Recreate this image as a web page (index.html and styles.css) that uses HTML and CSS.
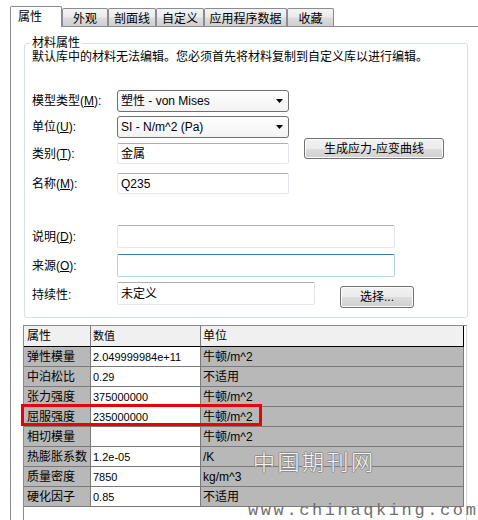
FILE: index.html
```html
<!DOCTYPE html>
<html>
<head>
<meta charset="utf-8">
<link rel="stylesheet" href="styles.css">
</head>
<body>
<div class="tabbar">
  <div class="tab active w52">属性</div>
  <div class="tab w46">外观</div>
  <div class="tab w48">剖面线</div>
  <div class="tab w48">自定义</div>
  <div class="tab w83">应用程序数据</div>
  <div class="tab w47">收藏</div>
</div>
<div class="panel">
  <fieldset class="group">
    <legend>材料属性</legend>
    <div class="desc">默认库中的材料无法编辑。您必须首先将材料复制到自定义库以进行编辑。</div>
    <div class="top">
      <div class="fields">
        <div class="row r1">
          <span class="lbl">模型类型(<u>M</u>):</span>
          <div class="combo"><span>塑性 - von Mises</span><svg width="7" height="4" viewBox="0 0 7 4"><path d="M0 0h7L3.5 4z" fill="#000"/></svg></div>
        </div>
        <div class="row r2">
          <span class="lbl">单位(<u>U</u>):</span>
          <div class="combo"><span>SI - N/m^2 (Pa)</span><svg width="7" height="4" viewBox="0 0 7 4"><path d="M0 0h7L3.5 4z" fill="#000"/></svg></div>
        </div>
        <div class="row r3">
          <span class="lbl">类别(<u>T</u>):</span>
          <div class="input short">金属</div>
        </div>
        <div class="row r4">
          <span class="lbl">名称(<u>M</u>):</span>
          <div class="input short">Q235</div>
        </div>
      </div>
      <div class="side"><div class="btn curve">生成应力-应变曲线</div></div>
    </div>
    <div class="row r5">
      <span class="lbl">说明(<u>D</u>):</span>
      <div class="input wide tall"></div>
    </div>
    <div class="row r6">
      <span class="lbl">来源(<u>O</u>):</span>
      <div class="input wide tall focus"></div>
    </div>
    <div class="row r7">
      <span class="lbl">持续性:</span>
      <div class="input mid tall">未定义</div>
      <div class="btn choose">选择...</div>
    </div>
  </fieldset>
  <div class="grid">
    <table>
      <tr class="head"><td class="c1">属性</td><td class="c2">数值</td><td class="c3">单位</td></tr>
      <tr><td class="c1">弹性模量</td><td class="c2">2.049999984e+11</td><td class="c3">牛顿/m^2</td></tr>
      <tr><td class="c1">中泊松比</td><td class="c2">0.29</td><td class="c3">不适用</td></tr>
      <tr><td class="c1">张力强度</td><td class="c2">375000000</td><td class="c3">牛顿/m^2</td></tr>
      <tr><td class="c1">屈服强度</td><td class="c2">235000000</td><td class="c3">牛顿/m^2</td></tr>
      <tr><td class="c1">相切模量</td><td class="c2"></td><td class="c3">牛顿/m^2</td></tr>
      <tr><td class="c1">热膨胀系数</td><td class="c2">1.2e-05</td><td class="c3">/K</td></tr>
      <tr><td class="c1">质量密度</td><td class="c2">7850</td><td class="c3">kg/m^3</td></tr>
      <tr><td class="c1">硬化因子</td><td class="c2">0.85</td><td class="c3">不适用</td></tr>
    </table>
    <div class="highlight"></div>
  </div>
</div>
<div class="wm1">中国期刊网</div>
<div class="wm2">www.chinaqking.com</div>
</body>
</html>
```
FILE: styles.css
```css
* { box-sizing: border-box; }
html, body { margin: 0; padding: 0; background: #fff; }
body {
  width: 478px; height: 520px; overflow: hidden; position: relative;
  font-family: "Liberation Sans", "Noto Sans CJK SC", sans-serif;
  font-size: 12px; line-height: 14px; color: #000;
}
u { text-decoration: underline; text-underline-offset: 1px; }

.tabbar {
  display: flex; align-items: flex-end;
  margin-left: 10px; padding-top: 6px; height: 27px;
  border-bottom: 1px solid #898c95;
}
.tab {
  height: 18px; display: flex; align-items: center; justify-content: center;
  padding-top: 2px;
  border: 1px solid #898c95; border-bottom: none;
  border-radius: 2px 2px 0 0;
  background: linear-gradient(#f4f4f4, #ebebeb 45%, #dcdcdc 55%, #cfcfcf);
}
.tab.active {
  height: 21px; margin-bottom: -1px; background: #fff; padding-top: 0;
  justify-content: flex-start; padding-left: 7px;
}
.w52 { width: 52px; } .w46 { width: 46px; } .w48 { width: 48px; }
.w83 { width: 83px; } .w47 { width: 47px; }

.panel {
  margin-left: 10px; border-left: 1px solid #898c95;
  padding-top: 8px; height: 493px;
}
.group {
  margin: 0 0 0 13px; width: 444px;
  border: 1px solid #d5dfe5; border-radius: 3px;
  padding: 0 7px 9px 7px;
}
.group legend { padding: 0 2px; margin-left: -2px; line-height: 16px; }
.desc { margin-top: -1px; line-height: 14px; white-space: nowrap; }

.top { display: flex; margin-top: 26px; }
.side { padding-left: 15px; padding-top: 48px; }
.row { display: flex; align-items: center; }
.lbl { width: 85px; flex: none; white-space: nowrap; }
.r2 { margin-top: 4px; }
.r3 { margin-top: 5px; }
.r4 { margin-top: 9px; }
.r5 { margin-top: 31px; }
.r6 { margin-top: 6px; }
.r7 { margin-top: 5px; align-items: flex-start; }
.r7 .lbl { margin-top: 6px; }

.combo {
  width: 172px; height: 22px;
  display: flex; align-items: center; justify-content: space-between;
  padding: 0 5px 0 3px;
  border: 1px solid #707070; border-radius: 3px;
  background: linear-gradient(#fdfdfd, #f3f3f3);
}
.input {
  height: 21px; padding: 0 3px; display: flex; align-items: center;
  border: 1px solid #e2e3ea; border-top-color: #abadb3; border-bottom-color: #e3e9ef;
  border-radius: 2px; background: #fff;
}
.input.short { width: 172px; }
.input.wide { width: 278px; }
.input.mid { width: 198px; }
.input.tall { height: 23px; }
.input.focus { border-color: #b5cfe7; border-top-color: #3d7bad; border-bottom-color: #b7d9ed; }

.btn {
  display: flex; align-items: center; justify-content: center;
  border: 1px solid #707070; border-radius: 3px;
  background: linear-gradient(#f2f2f2, #ebebeb 50%, #dddddd 50%, #cfcfcf);
  box-shadow: inset 0 0 0 1px #fcfcfc;
}
.btn.curve { width: 140px; height: 21px; }
.btn.choose { width: 74px; height: 22px; margin-left: 25px; margin-top: 4px; }

.grid {
  position: relative;
  margin: 7px 0 0 12px; width: 444px; height: 210px;
  border: 1px solid #8a8a8a; border-right-color: #d8d8d8; border-bottom: none;
  background: #fff;
}
table { border-collapse: separate; border-spacing: 0; width: 440px; table-layout: fixed; }
td {
  height: 20px; padding: 0 2px; vertical-align: middle;
  border-right: 1px solid #7a7a7a; border-bottom: 1px solid #7a7a7a;
  background: #b8b8b8; white-space: nowrap; overflow: hidden;
}
td.c1 { width: 67px; padding-left: 3px; }
td.c2 { width: 110px; background: #fff; font-size: 11px; }
td.c3 { width: 263px; }
tr.head td { height: 21px; background: #f0f0f0; border-bottom-color: #000; }
tr.head td.c3 { border-right-color: #000; }
.highlight {
  position: absolute; left: -3px; top: 78px; width: 241px; height: 22px;
  border: 3px solid #e8000e;
}

.wm1 {
  position: absolute; left: 253px; top: 447px;
  font-family: "Noto Sans CJK SC", sans-serif; font-weight: 300;
  font-size: 22px; line-height: 26px; letter-spacing: 2.5px;
  color: #f4f4f4;
  text-shadow: 1px 0 0 #8e8e8e, -1px 0 0 #8e8e8e, 0 1px 0 #8e8e8e, 0 -1px 0 #8e8e8e;
}
.wm2 {
  position: absolute; left: 248px; top: 502px;
  font-family: "Liberation Mono", monospace; font-size: 17px; line-height: 17px;
  letter-spacing: 2.6px; color: #6f6f6f; white-space: nowrap;
}
```
